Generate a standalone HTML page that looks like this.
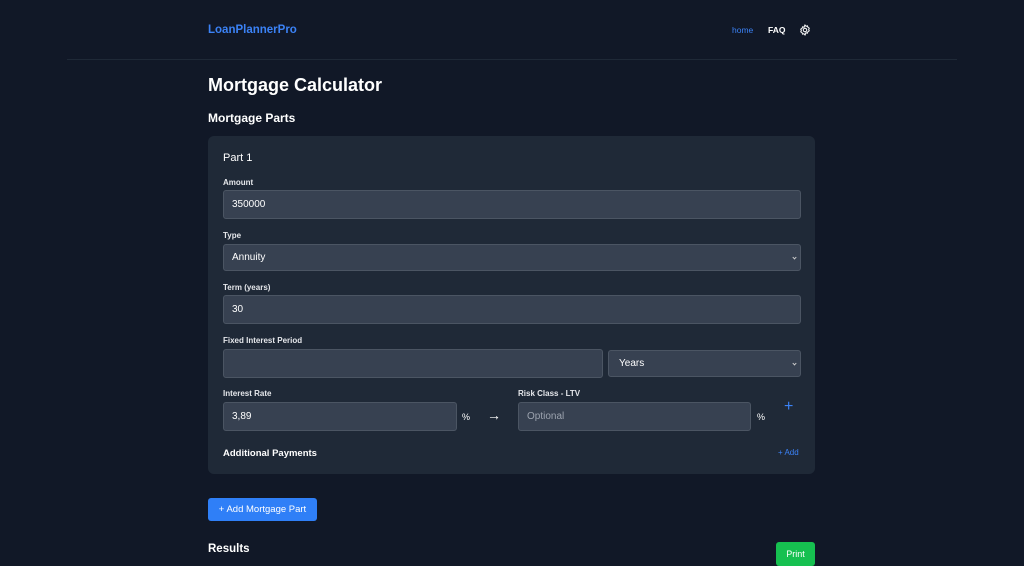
<!DOCTYPE html>
<html><head><meta charset="utf-8"><style>
*{box-sizing:border-box;margin:0;padding:0}
body{width:1024px;height:564px;overflow:hidden;background:#111827;font-family:"Liberation Sans",sans-serif;color:#fff;position:relative}
.a{position:absolute;white-space:nowrap}
.lbl{font-size:8px;font-weight:bold;color:#e5e7eb}
.in{position:absolute;background:#374151;border:1px solid #4b5563;border-radius:3px;font-size:10px;color:#fff;padding-left:8px;display:flex;align-items:center}
.chev{position:absolute;right:4px;top:50%;width:3px;height:3px;border-right:1px solid #ccc;border-bottom:1px solid #ccc;transform:translateY(-70%) rotate(45deg)}
</style></head><body>
<div class="a" style="left:208px;top:24px;font-size:11.5px;font-weight:bold;color:#3b82f6">LoanPlannerPro</div>
<div class="a" style="left:732px;top:25px;font-size:8.5px;color:#3b82f6">home</div>
<div class="a" style="left:768px;top:25px;font-size:8.5px;font-weight:bold">FAQ</div>
<svg class="a" style="left:799px;top:24px" width="12" height="12" viewBox="0 0 24 24" fill="none" stroke="#fff" stroke-width="2"><path d="M12 2l2 2.5 3-.8.8 3 2.7 1.6-1.2 2.7 1.2 2.7-2.7 1.6-.8 3-3-.8L12 22l-2-2.5-3 .8-.8-3-2.7-1.6L4.7 13 3.5 10.3l2.7-1.6.8-3 3 .8z"/><circle cx="12" cy="12" r="3.5"/></svg>
<div class="a" style="left:67px;top:59px;width:890px;height:1px;background:#1f2937"></div>
<div class="a" style="left:208px;top:75px;font-size:18px;font-weight:bold">Mortgage Calculator</div>
<div class="a" style="left:208px;top:111px;font-size:12px;font-weight:bold">Mortgage Parts</div>
<div class="a" style="left:208px;top:136px;width:607px;height:338px;background:#1f2937;border-radius:6px"></div>
<div class="a" style="left:223px;top:152px;font-size:11px">Part 1</div>
<div class="a lbl" style="left:223px;top:178px">Amount</div>
<div class="in" style="left:223px;top:190px;width:578px;height:29px">350000</div>
<div class="a lbl" style="left:223px;top:231px">Type</div>
<div class="in" style="left:223px;top:244px;width:578px;height:27px">Annuity<span class="chev"></span></div>
<div class="a lbl" style="left:223px;top:283px">Term (years)</div>
<div class="in" style="left:223px;top:295px;width:578px;height:29px">30</div>
<div class="a lbl" style="left:223px;top:336px">Fixed Interest Period</div>
<div class="in" style="left:223px;top:349px;width:380px;height:29px"></div>
<div class="in" style="left:608px;top:350px;width:193px;height:27px;padding-left:10px">Years<span class="chev"></span></div>
<div class="a lbl" style="left:223px;top:389px">Interest Rate</div>
<div class="in" style="left:223px;top:402px;width:234px;height:29px">3,89</div>
<div class="a" style="left:462px;top:412px;font-size:9px">%</div>
<div class="a" style="left:487px;top:407px;font-size:14px;font-weight:bold">→</div>
<div class="a lbl" style="left:518px;top:389px">Risk Class - LTV</div>
<div class="in" style="left:518px;top:402px;width:233px;height:29px;color:#9ca3af">Optional</div>
<div class="a" style="left:757px;top:412px;font-size:9px">%</div>
<div class="a" style="left:784px;top:398px;font-size:16px;color:#3b82f6">+</div>
<div class="a" style="left:223px;top:448px;font-size:9.5px;font-weight:bold">Additional Payments</div>
<div class="a" style="left:778px;top:448px;font-size:8px;color:#3b82f6">+ Add</div>
<div class="a" style="left:208px;top:498px;width:109px;height:23px;background:#2f7ff7;border-radius:3px;font-size:9.5px;display:flex;align-items:center;justify-content:center">+ Add Mortgage Part</div>
<div class="a" style="left:208px;top:543px;font-size:11.5px;font-weight:bold">Results</div>
<div class="a" style="left:776px;top:542px;width:39px;height:24px;background:#16c050;border-radius:3px;font-size:9px;display:flex;align-items:center;justify-content:center">Print</div>
</body></html>
